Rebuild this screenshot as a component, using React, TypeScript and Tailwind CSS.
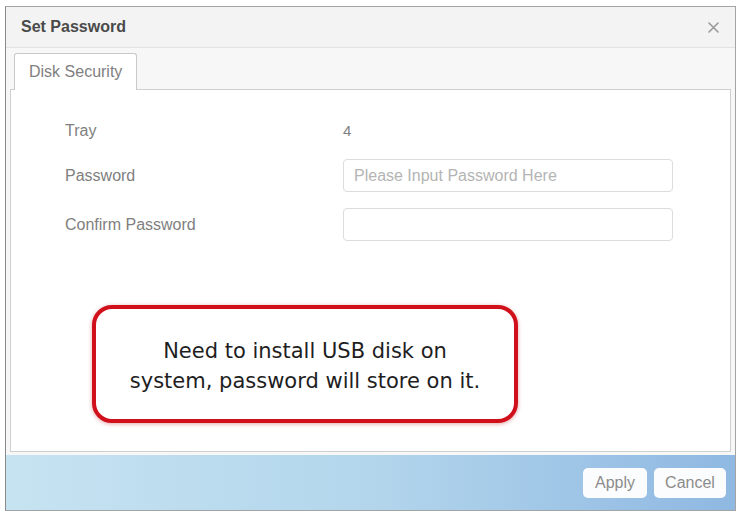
const UI_FONT = "font-['Liberation_Sans',Arial,sans-serif]";

function CloseIcon() {
  return (
    <svg width="11" height="11" viewBox="0 0 11 11" className="text-[#9a9a9a]">
      <path d="M1 1 L10 10 M10 1 L1 10" stroke="currentColor" strokeWidth="1.6" strokeLinecap="round" />
    </svg>
  );
}

function FieldRow({ label, children }: { label: string; children: React.ReactNode }) {
  return (
    <div className="grid grid-cols-[278px_330px] items-center">
      <span className="text-[16px] text-[#808080]">{label}</span>
      {children}
    </div>
  );
}

export default function App() {
  return (
    <div className={`w-[737px] h-[515px] bg-white pt-[6px] pl-[5px] pr-[1px] ${UI_FONT}`}>
      <div className="flex h-[505px] flex-col border border-[#a4a4a4] border-l-[#8a8a8a] bg-[#f7f7f7]">
        {/* title bar */}
        <div className="flex h-[41px] shrink-0 items-center justify-between border-b border-[#e2e2e2] bg-[#f3f3f3] pl-[15px] pr-[16px]">
          <span className="text-[16px] font-bold text-[#4a4a4a]">Set Password</span>
          <CloseIcon />
        </div>

        {/* tabs */}
        <div className="flex shrink-0 pt-[5px] pl-[8px]">
          <div className="relative -mb-px flex h-[37px] w-[123px] items-center rounded-t-[3px] border border-b-0 border-[#c8c8c8] bg-white pl-[14px] text-[16px] text-[#808080]">
            Disk Security
          </div>
        </div>

        {/* panel */}
        <div className="mx-[4px] flex flex-1 flex-col border border-[#cfcfcf] bg-white pl-[54px] pt-[29px]">
          <FieldRow label="Tray">
            <span className="h-[24px] leading-[24px] text-[15px] text-[#808080]">4</span>
          </FieldRow>
          <div className="mt-[16px]">
            <FieldRow label="Password">
              <div className="flex h-[33px] items-center rounded-[4px] border border-[#dcdcdc] bg-white pl-[10px] text-[16px] text-[#b4b4b4]">
                Please Input Password Here
              </div>
            </FieldRow>
          </div>
          <div className="mt-[16px]">
            <FieldRow label="Confirm Password">
              <div className="h-[33px] rounded-[4px] border border-[#dcdcdc] bg-white" />
            </FieldRow>
          </div>

          {/* callout */}
          <div className="ml-[27px] mt-[64px] flex h-[118px] w-[426px] flex-col items-center justify-center rounded-[20px] border-4 border-[#d0101b] bg-white pt-[4px] shadow-[0_1px_4px_rgba(180,0,0,0.35)] font-['DejaVu_Sans',Verdana,sans-serif] text-[21px] leading-[30px] text-[#1e1e1e]">
            <span>Need to install USB disk on</span>
            <span>system, password will store on it.</span>
          </div>
        </div>

        {/* footer */}
        <div className="mt-[3px] flex h-[55px] shrink-0 items-center justify-end gap-[7px] bg-gradient-to-r from-[#c6e3f1] via-[#b3d6ec] to-[#8fb8e2] pr-[9px]">
          <button className="h-[30px] w-[64px] rounded-[5px] bg-[#fbfcfd] text-[16px] text-[#8c8c8c]">
            Apply
          </button>
          <button className="h-[30px] w-[72px] rounded-[5px] bg-[#fbfcfd] text-[16px] text-[#8c8c8c]">
            Cancel
          </button>
        </div>
      </div>
    </div>
  );
}
